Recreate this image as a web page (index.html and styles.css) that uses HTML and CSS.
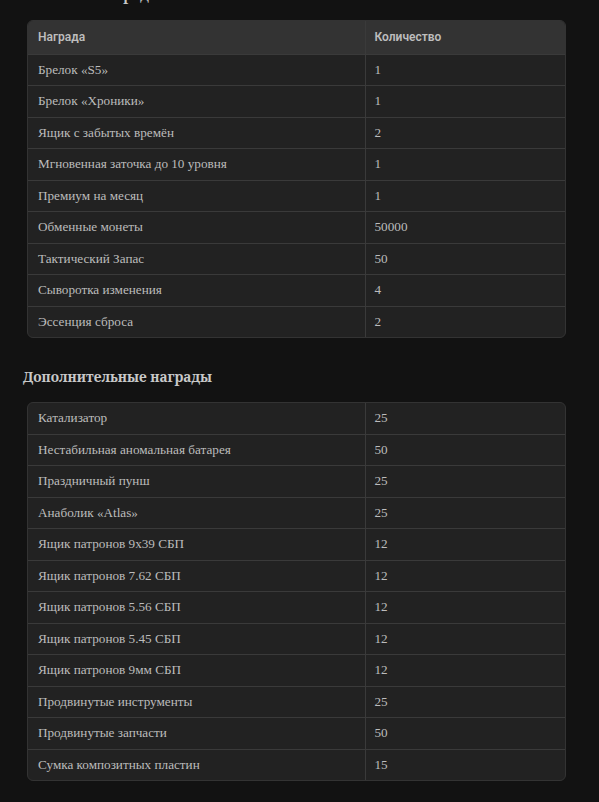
FILE: index.html
```html
<!DOCTYPE html>
<html lang="ru">
<head>
  <meta charset="UTF-8">
  <meta name="viewport" content="width=device-width, initial-scale=1.0">
  <title>Награды</title>
  <link rel="stylesheet" href="styles.css">
</head>
<body>
  <div class="content">
    <h3 class="section-title first">Основные награды</h3>
    <div class="table-wrap">
      <table>
        <colgroup>
          <col class="col-name">
          <col class="col-count">
        </colgroup>
        <thead>
          <tr>
            <th>Награда</th>
            <th>Количество</th>
          </tr>
        </thead>
        <tbody>
          <tr><td>Брелок «S5»</td><td>1</td></tr>
          <tr><td>Брелок «Хроники»</td><td>1</td></tr>
          <tr><td>Ящик с забытых времён</td><td>2</td></tr>
          <tr><td>Мгновенная заточка до 10 уровня</td><td>1</td></tr>
          <tr><td>Премиум на месяц</td><td>1</td></tr>
          <tr><td>Обменные монеты</td><td>50000</td></tr>
          <tr><td>Тактический Запас</td><td>50</td></tr>
          <tr><td>Сыворотка изменения</td><td>4</td></tr>
          <tr><td>Эссенция сброса</td><td>2</td></tr>
        </tbody>
      </table>
    </div>

    <h3 class="section-title">Дополнительные награды</h3>
    <div class="table-wrap">
      <table>
        <colgroup>
          <col class="col-name">
          <col class="col-count">
        </colgroup>
        <tbody>
          <tr><td>Катализатор</td><td>25</td></tr>
          <tr><td>Нестабильная аномальная батарея</td><td>50</td></tr>
          <tr><td>Праздничный пунш</td><td>25</td></tr>
          <tr><td>Анаболик «Atlas»</td><td>25</td></tr>
          <tr><td>Ящик патронов 9х39 СБП</td><td>12</td></tr>
          <tr><td>Ящик патронов 7.62 СБП</td><td>12</td></tr>
          <tr><td>Ящик патронов 5.56 СБП</td><td>12</td></tr>
          <tr><td>Ящик патронов 5.45 СБП</td><td>12</td></tr>
          <tr><td>Ящик патронов 9мм СБП</td><td>12</td></tr>
          <tr><td>Продвинутые инструменты</td><td>25</td></tr>
          <tr><td>Продвинутые запчасти</td><td>50</td></tr>
          <tr><td>Сумка композитных пластин</td><td>15</td></tr>
        </tbody>
      </table>
    </div>
  </div>
</body>
</html>
```

FILE: styles.css
```css
body {
  margin: 0;
  padding: 0;
  background-color: #121212;
  color: #c4c4c4;
  font-family: "Liberation Serif", "DejaVu Serif", serif;
}

.content {
  padding: 0 33px 40px 23px;
}

.section-title {
  font-family: "Noto Serif", "Liberation Serif", serif;
  font-size: 13.7px;
  font-weight: bold;
  line-height: 20px;
  color: #c8c8c8;
  margin: 29px 0 15px 0;
}

.section-title.first {
  margin-top: -15px;
}

.table-wrap {
  margin-left: 4px;
  border: 1px solid #333;
  border-radius: 6px;
  overflow: hidden;
  background-color: #222;
}

table {
  width: 100%;
  border-collapse: collapse;
  table-layout: fixed;
}

.col-name {
  width: 337px;
}

th, td {
  text-align: left;
  padding: 6px 10px;
  line-height: 18.5px;
  border-bottom: 1px solid #3a3a3a;
}

th + th, td + td {
  border-left: 1px solid #3a3a3a;
  padding-left: 9px;
}

tr:last-child td {
  border-bottom: none;
}

th {
  background-color: #333;
  font-family: Roboto, "Open Sans", sans-serif;
  font-weight: 600;
  font-size: 12px;
  color: #bdbdbd;
  padding-top: 7px;
  padding-bottom: 7px;
}

td {
  font-size: 13.2px;
  color: #bcbcbc;
}
```
